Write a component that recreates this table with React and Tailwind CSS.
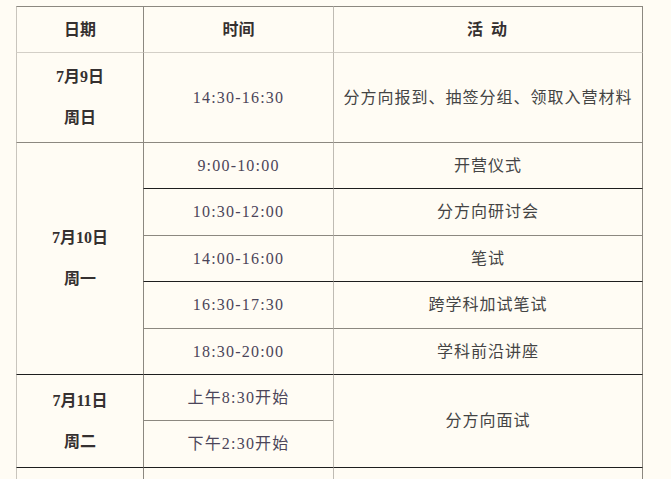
import React from 'react';

const serif = "font-['Liberation_Serif','Noto_Sans_CJK_SC',serif]";

// border colours used in the source table
// gray  #8c8880, light #d3cfc7, dark #1e1e1e

const Cell = ({ className = '', children }) => (
  <div className={`flex items-center justify-center border-t border-l ${className}`}>
    {children}
  </div>
);

const DateCell = ({ date, week, className }) => (
  <Cell className={`col-start-1 border-l-[#c9c5bd] ${className}`}>
    <div className="flex flex-col items-center gap-[17px] font-bold text-[#353030] leading-[24px]">
      <span>{date}</span>
      <span>{week}</span>
    </div>
  </Cell>
);

const Time = ({ children, className }) => (
  <Cell className={`col-start-2 border-l-[#8c8880] ${className}`}>
    <span className="text-[#4b4559] tracking-[1.2px]">{children}</span>
  </Cell>
);

const Act = ({ children, className }) => (
  <Cell className={`col-start-3 border-l-[#bfbbb3] border-r border-r-[#8c8880] ${className}`}>
    <span className="text-[#444] tracking-[1px]">{children}</span>
  </Cell>
);

export default function App() {
  return (
    <div className={`h-[479px] overflow-hidden bg-[#fffcf4] ${serif} text-[16px]`}>
      <div className="ml-[16px] mt-[6px] grid grid-cols-[127px_190px_310px] grid-rows-[46px_90px_46px_47px_46px_47px_46px_46px_47px_46px]">
        {/* header */}
        <Cell className="col-start-1 row-start-1 border-t-[#8c8880] border-l-[#c9c5bd] font-bold text-[#353030]">日期</Cell>
        <Cell className="col-start-2 row-start-1 border-t-[#8c8880] border-l-[#8c8880] font-bold text-[#353030]">时间</Cell>
        <Cell className="col-start-3 row-start-1 border-t-[#8c8880] border-l-[#bfbbb3] border-r border-r-[#8c8880] font-bold text-[#353030]">
          <span className="tracking-[2px]">活 动</span>
        </Cell>

        {/* 7/9 */}
        <DateCell date="7月9日" week="周日" className="row-start-2 border-t-[#d3cfc7]" />
        <Time className="row-start-2 border-t-[#d3cfc7]">14:30-16:30</Time>
        <Act className="row-start-2 border-t-[#d3cfc7]">分方向报到、抽签分组、领取入营材料</Act>

        {/* 7/10 */}
        <DateCell date="7月10日" week="周一" className="row-start-3 row-span-5 border-t-[#8c8880]" />
        <Time className="row-start-3 border-t-[#8c8880]">9:00-10:00</Time>
        <Act className="row-start-3 border-t-[#8c8880]">开营仪式</Act>
        <Time className="row-start-4 border-t-[#1e1e1e]">10:30-12:00</Time>
        <Act className="row-start-4 border-t-[#1e1e1e]">分方向研讨会</Act>
        <Time className="row-start-5 border-t-[#8c8880]">14:00-16:00</Time>
        <Act className="row-start-5 border-t-[#8c8880]">笔试</Act>
        <Time className="row-start-6 border-t-[#1e1e1e]">16:30-17:30</Time>
        <Act className="row-start-6 border-t-[#1e1e1e]">跨学科加试笔试</Act>
        <Time className="row-start-7 border-t-[#8c8880]">18:30-20:00</Time>
        <Act className="row-start-7 border-t-[#8c8880]">学科前沿讲座</Act>

        {/* 7/11 */}
        <DateCell date="7月11日" week="周二" className="row-start-8 row-span-2 border-t-[#1e1e1e]" />
        <Time className="row-start-8 border-t-[#1e1e1e]">上午8:30开始</Time>
        <Act className="row-start-8 row-span-2 border-t-[#1e1e1e]">分方向面试</Act>
        <Time className="row-start-9 border-t-[#8c8880]">下午2:30开始</Time>

        {/* next row, cut off by the window */}
        <Cell className="col-start-1 row-start-10 border-t-[#1e1e1e] border-l-[#c9c5bd]" />
        <Cell className="col-start-2 row-start-10 border-t-[#1e1e1e] border-l-[#8c8880]" />
        <Cell className="col-start-3 row-start-10 border-t-[#1e1e1e] border-l-[#bfbbb3] border-r border-r-[#8c8880]" />
      </div>
    </div>
  );
}
